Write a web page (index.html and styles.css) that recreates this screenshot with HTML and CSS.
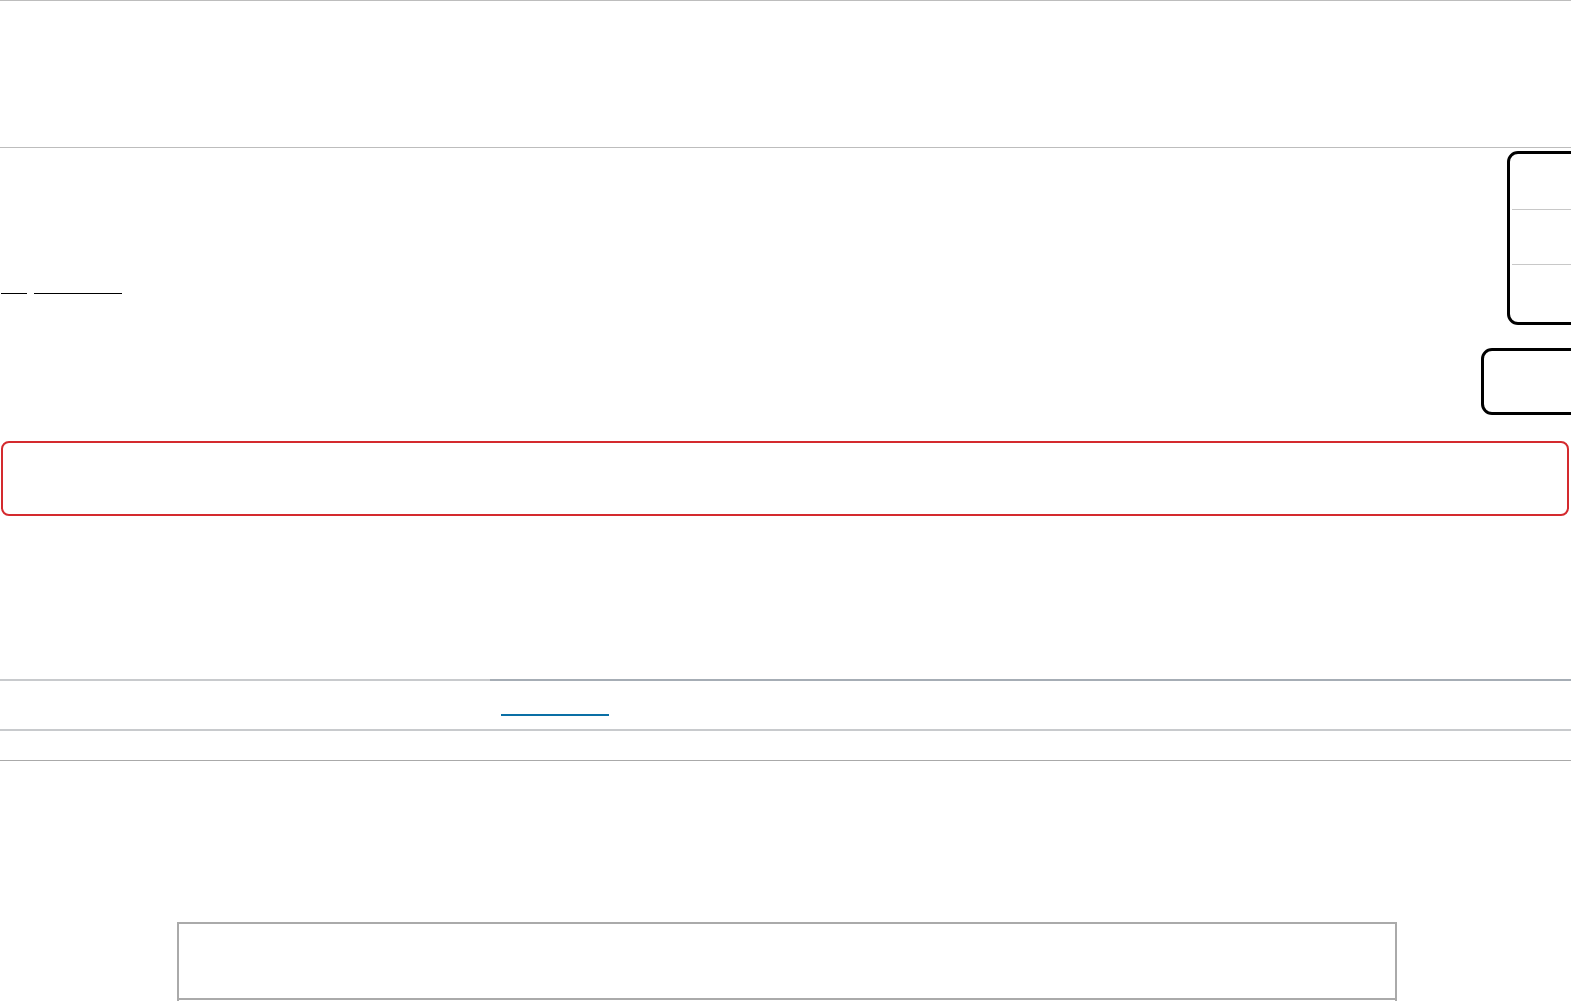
FILE: index.html
```html
<!DOCTYPE html>
<html>
<head>
<meta charset="utf-8">
<link rel="stylesheet" href="styles.css">
</head>
<body>
<div class="page">
  <header class="header"></header>
  <section class="top">
    <nav class="links">
      <a class="link link-short"></a>
      <a class="link link-long"></a>
    </nav>
    <aside class="side">
      <div class="panel">
        <div class="panel-row"></div>
        <div class="panel-row"></div>
        <div class="panel-row last"></div>
      </div>
      <div class="button-box"></div>
    </aside>
  </section>
  <div class="alert"></div>
  <div class="tabs">
    <div class="tab-left"></div>
    <div class="tab-right"><span class="tab-active"></span></div>
  </div>
  <div class="subbar"></div>
  <div class="table-wrap">
    <div class="table">
      <div class="table-head"></div>
      <div class="table-body"></div>
    </div>
  </div>
</div>
</body>
</html>
```

FILE: styles.css
```css
html, body {
  margin: 0;
  padding: 0;
  background: #fff;
  font-family: "Liberation Sans", Arial, sans-serif;
  overflow: hidden;
  height: 1001px;
}
.page {
  width: 1571px;
  overflow: hidden;
}
.header {
  height: 146px;
  border-top: 1px solid #bdbdbd;
  border-bottom: 1px solid #bdbdbd;
}
.top {
  height: 293px;
  display: flex;
  justify-content: space-between;
}
.links {
  display: flex;
  align-items: flex-start;
  padding-top: 145px;
  padding-left: 1px;
  gap: 7px;
}
.link {
  display: block;
  height: 0;
  border-bottom: 1px solid #000;
}
.link-short { width: 26px; }
.link-long { width: 88px; }
.side {
  width: 90px;
  display: flex;
  flex-direction: column;
}
.panel {
  margin-top: 3px;
  margin-left: 26px;
  width: 100px;
  height: 168px;
  border: 3px solid #000;
  border-radius: 11px;
  display: flex;
  flex-direction: column;
  padding-left: 2px;
  flex-shrink: 0;
}
.panel-row {
  height: 54px;
  border-bottom: 1px solid #c8c8c8;
}
.panel-row:first-child { height: 55px; }
.panel-row.last {
  border-bottom: none;
  flex: 1;
}
.button-box {
  margin-top: 23px;
  width: 120px;
  height: 61px;
  border: 3px solid #000;
  border-radius: 11px;
  flex-shrink: 0;
}
.alert {
  margin: 0 2px 0 1px;
  height: 71px;
  border: 2px solid #d42a2e;
  border-radius: 8px;
}
.tabs {
  margin-top: 163px;
  display: flex;
  border-bottom: 2px solid #c8cacd;
}
.tab-left {
  width: 490px;
  height: 48px;
  border-top: 2px solid #c8cacd;
}
.tab-right {
  flex: 1;
  height: 48px;
  border-top: 2px solid #a6adb5;
  padding-left: 11px;
}
.tab-active {
  display: block;
  width: 108px;
  height: 33px;
  border-bottom: 2px solid #0a6fa5;
}
.subbar {
  height: 29px;
  border-bottom: 1px solid #aaaaaa;
}
.table-wrap {
  padding-top: 161px;
  padding-left: 177px;
}
.table {
  width: 1216px;
  border: 2px solid #aaaaaa;
  border-bottom: none;
}
.table-head {
  height: 74px;
  border-bottom: 2px solid #aaaaaa;
}
.table-body {
  height: 60px;
}
```
